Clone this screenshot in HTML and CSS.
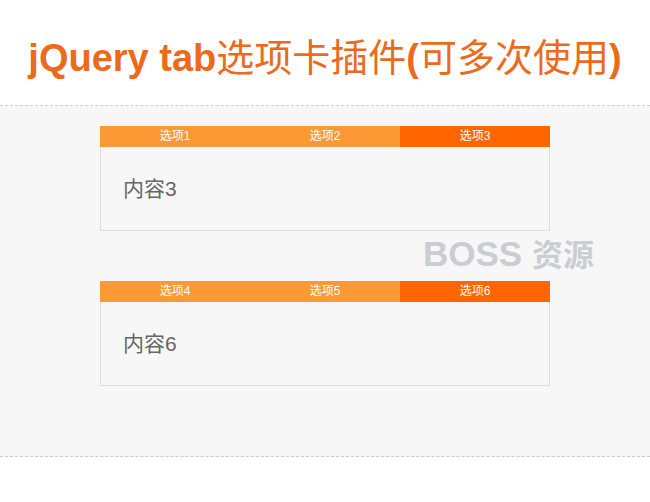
FILE: index.html
```html
<html>

<head>
    <title>jQuery tab选项卡插件</title>
    <link rel="stylesheet" href="styles.css">
    <script>
        function showTab(el) {
            let box = el.parentElement.parentElement;
            let tabs = box.querySelectorAll('.tab');
            for (let i = 0; i < tabs.length; i++) {
                tabs[i].classList.remove('active');
            }
            el.classList.add('active');
            box.querySelector('.panel').innerText = '内容' + el.innerText.replace('选项', '');
        }
    </script>
</head>

<body>
    <div class="header">
        <h1>jQuery tab<span class="cn">选项卡插件</span>(<span class="cn">可多次使用</span>)</h1>
    </div>
    <div class="main">
        <div class="tabbox">
            <div class="tabs">
                <div class="tab" onclick="showTab(this)">选项1</div>
                <div class="tab" onclick="showTab(this)">选项2</div>
                <div class="tab active" onclick="showTab(this)">选项3</div>
            </div>
            <div class="panel">内容3</div>
        </div>
        <div class="tabbox">
            <div class="tabs">
                <div class="tab" onclick="showTab(this)">选项4</div>
                <div class="tab" onclick="showTab(this)">选项5</div>
                <div class="tab active" onclick="showTab(this)">选项6</div>
            </div>
            <div class="panel">内容6</div>
        </div>
        <div class="mark">BOSS <span class="mark-cn">资源</span></div>
    </div>
</body>

</html>
```

FILE: styles.css
```css
* {
    box-sizing: border-box;
}

body {
    margin: 0px;
    background-color: white;
    font-family: "Liberation Sans", Arial, "Noto Sans CJK SC", sans-serif;
}

.header {
    height: 106px;
    border-bottom: 1px dashed #cccccc;
}

h1 {
    margin: 0px;
    padding-top: 32px;
    text-align: center;
    font-size: 38px;
    line-height: 46px;
    font-weight: bold;
    color: #ec6a1c;
}

.cn {
    font-weight: normal;
    font-family: "Noto Sans CJK SC", sans-serif;
}

.main {
    position: relative;
    height: 351px;
    padding-top: 20px;
    background-color: #f7f7f7;
    border-bottom: 1px dashed #cccccc;
}

.tabbox {
    width: 450px;
    margin: 0 auto 50px auto;
}

.tabs {
    display: flex;
    height: 21px;
    background-color: #fd9935;
}

.tab {
    width: 150px;
    text-align: center;
    font-size: 12px;
    line-height: 21px;
    color: white;
    cursor: pointer;
}

.tab.active {
    background-color: #ff6600;
}

.panel {
    height: 84px;
    padding-left: 22px;
    border: 1px solid #dddddd;
    border-top: none;
    font-size: 21px;
    line-height: 84px;
    color: #666666;
}

.mark {
    position: absolute;
    left: 423px;
    top: 124px;
    font-size: 35px;
    font-weight: bold;
    color: #c9cdd4;
}

.mark-cn {
    font-family: "Noto Sans CJK SC", sans-serif;
    font-size: 31px;
}
```
